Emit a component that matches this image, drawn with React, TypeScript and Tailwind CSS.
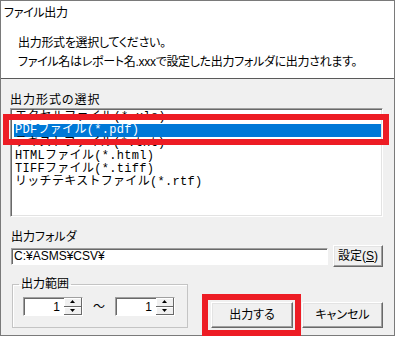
import type { ReactNode } from 'react'

const ui = "font-['Liberation_Sans','Noto_Sans_CJK_JP',sans-serif] [font-feature-settings:'palt'] text-[12px] text-black"
const mono = "font-['Liberation_Mono','Noto_Sans_CJK_JP',monospace] [font-feature-settings:normal] text-[12px] tracking-[0.3px]"

const formats = [
  'エクセルファイル(*.xls)',
  'PDFファイル(*.pdf)',
  'テキストファイル(*.txt)',
  'HTMLファイル(*.html)',
  'TIFFファイル(*.tiff)',
  'リッチテキストファイル(*.rtf)',
]

function Button({ children, className }: { children: ReactNode; className: string }) {
  return (
    <button
      className={`flex items-center justify-center bg-[#f0f0f0] border border-t-white border-l-white border-r-[#696969] border-b-[#696969] shadow-[inset_-1px_-1px_0_#a0a0a0,inset_1px_1px_0_#e3e3e3] ${className}`}
    >
      {children}
    </button>
  )
}

function Arrow({ up }: { up?: boolean }) {
  return (
    <svg width="5" height="3" viewBox="0 0 5 3">
      <path d={up ? 'M2.5 0 L5 3 L0 3 Z' : 'M0 0 L5 0 L2.5 3 Z'} fill="#000" />
    </svg>
  )
}

function Spin() {
  return (
    <div className="flex h-[19px] w-[60px] border border-t-[#a0a0a0] border-l-[#a0a0a0] border-r-white border-b-white">
      <div className="flex-1 h-full bg-white shadow-[inset_1px_1px_0_#696969] flex items-center justify-end pr-[4px] leading-none">
        1
      </div>
      <div className="flex flex-col w-[18px] h-full bg-white">
        <div className="flex-1 flex items-center justify-center bg-[#f0f0f0] border-r border-b border-r-[#696969] border-b-[#696969] shadow-[inset_1px_1px_0_#fff]">
          <Arrow up />
        </div>
        <div className="flex-1 flex items-center justify-center bg-[#f0f0f0] border-r border-b border-r-[#696969] border-b-[#696969] shadow-[inset_1px_1px_0_#fff]">
          <Arrow />
        </div>
      </div>
    </div>
  )
}

export default function App() {
  return (
    <div className={`relative w-[395px] h-[338px] bg-white ${ui}`}>
      <div className="w-[395px] h-[336px] border border-[#7a7a7a] flex flex-col bg-[#f0f0f0]">
        {/* header */}
        <div className="h-[78px] bg-white border-b border-b-[#5a5a5a] shrink-0 tracking-[-0.3px]">
          <div className="pl-[3px] pt-[4px] leading-[16px]">ファイル出力</div>
          <div className="pl-[17px] mt-[13px] leading-[19px]">
            <div>出力形式を選択してください。</div>
            <div>ファイル名はレポート名.xxxで設定した出力フォルダに出力されます。</div>
          </div>
        </div>

        <div className="pl-[9px] pt-[13px] leading-[16px] tracking-[1px]">出力形式の選択</div>
        <div className="ml-[9px] w-[373px] h-[109px] bg-white border border-t-[#a0a0a0] border-l-[#a0a0a0] border-r-white border-b-white shadow-[inset_1px_1px_0_#696969,inset_-1px_-1px_0_#e3e3e3] pt-[2px] pl-[3px] pr-[1px]">
          {formats.map((f, i) => (
            <div
              key={f}
              className={`h-[13px] leading-[13px] pl-[1px] whitespace-nowrap ${mono} ${i === 1 ? 'bg-[#0078d7] text-white' : 'text-black'}`}
            >
              {f}
            </div>
          ))}
        </div>

        <div className="pl-[10px] mt-[12px] leading-[16px]">出力フォルダ</div>
        <div className="flex items-center h-[22px] pl-[10px]">
          <div className="w-[317px] h-[17px] bg-white border border-t-[#a0a0a0] border-l-[#a0a0a0] border-r-white border-b-white shadow-[inset_1px_1px_0_#696969] flex items-center pl-[2px] leading-none">
            C:¥ASMS¥CSV¥
          </div>
          <Button className="ml-[5px] w-[50px] h-[22px]">
            設定(<span className="underline">S</span>)
          </Button>
        </div>

        <div className="flex mt-[10px]">
          <fieldset className="ml-[11px] w-[176px] h-[51px] border border-[#c4c4c4] shadow-[inset_1px_1px_0_#fff]">
            <legend className="ml-[6px] px-[2px] leading-[14px]">出力範囲</legend>
            <div className="flex items-center mt-[6px] pl-[10px]">
              <Spin />
              <span className="w-[32px] text-center">～</span>
              <Spin />
            </div>
          </fieldset>
          <Button className="ml-[23px] mt-[25px] w-[82px] h-[26px]">出力する</Button>
          <Button className="ml-[9px] mt-[25px] w-[81px] h-[26px]">キャンセル</Button>
        </div>
      </div>

      {/* highlight annotations */}
      <div className="absolute left-[3px] top-[114px] w-[386px] h-[31px] border-[6px] border-[#ed1c24]" />
      <div className="absolute left-[202px] top-[294px] w-[99px] h-[42px] border-[6px] border-[#ed1c24]" />
    </div>
  )
}
